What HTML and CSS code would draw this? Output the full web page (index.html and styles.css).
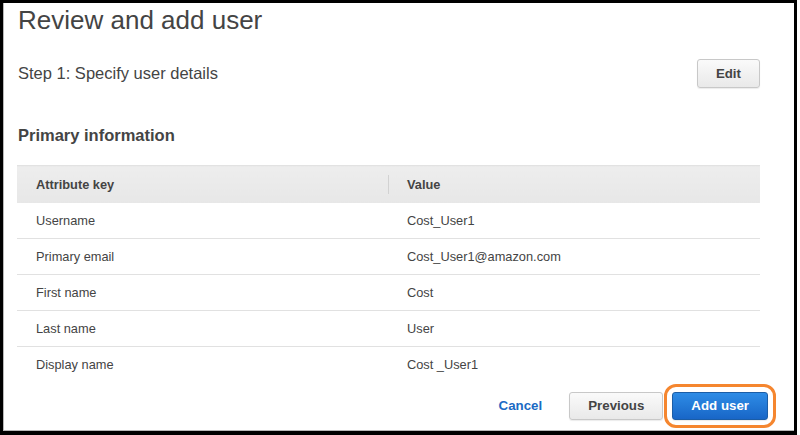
FILE: index.html
```html
<!DOCTYPE html>
<html lang="en">
<head>
<meta charset="utf-8">
<title>Review and add user</title>
<link rel="stylesheet" href="styles.css">
</head>
<body>
<div class="frame">
  <h1 class="title">Review and add user</h1>
  <div class="step-row">
    <h2 class="step">Step 1: Specify user details</h2>
    <button class="btn">Edit</button>
  </div>
  <h3 class="section">Primary information</h3>
  <table class="attrs">
    <thead>
      <tr><th class="col-key">Attribute key</th><th class="col-val"><span class="divider"></span>Value</th></tr>
    </thead>
    <tbody>
      <tr><td>Username</td><td class="val">Cost_User1</td></tr>
      <tr><td>Primary email</td><td class="val">Cost_User1@amazon.com</td></tr>
      <tr><td>First name</td><td class="val">Cost</td></tr>
      <tr><td>Last name</td><td class="val">User</td></tr>
      <tr class="last"><td>Display name</td><td class="val">Cost _User1</td></tr>
    </tbody>
  </table>
  <div class="footer">
    <button class="link-btn">Cancel</button>
    <button class="btn btn-foot">Previous</button>
    <button class="btn btn-primary highlighted">Add user</button>
  </div>
</div>
</body>
</html>
```
FILE: styles.css
```css
* { box-sizing: border-box; }
html, body { margin: 0; padding: 0; background: #fff; }
body {
  font-family: Arial, "Liberation Sans", sans-serif;
  color: #444;
}
.frame {
  width: 797px;
  height: 435px;
  border-style: solid;
  border-color: #000;
  border-width: 3px 3px 4px 3px;
  box-shadow: inset 1px -1px 0 #b8b8b8;
  padding: 2px 34px 0 15px;
  overflow: hidden;
}
.title {
  margin: 0;
  font-size: 26px;
  line-height: 30px;
  font-weight: normal;
  color: #444;
}
.step-row {
  margin-top: 24px;
  display: flex;
  align-items: center;
  justify-content: space-between;
  height: 29px;
}
.step {
  margin: 0 0 2px 0;
  font-size: 16.5px;
  line-height: 20px;
  font-weight: normal;
  color: #444;
}
.btn {
  font-family: Arial, "Liberation Sans", sans-serif;
  font-size: 13.3px;
  font-weight: bold;
  color: #444;
  height: 29px;
  padding: 0 18px;
  border: 1px solid #c8c8c8;
  border-radius: 3px;
  background: linear-gradient(#fafafa, #e9e9e9);
  box-shadow: 0 1px 1px rgba(0,0,0,0.08);
  cursor: pointer;
}
.section {
  margin: 37px 0 0 0;
  font-size: 16.5px;
  line-height: 20px;
  font-weight: bold;
  color: #444;
}
.attrs {
  margin: 20px 0 0 -1px;
  width: calc(100% + 1px);
  border-collapse: collapse;
  font-size: 12.8px;
}
.attrs th {
  height: 37px;
  background: linear-gradient(#ededed, #e7e7e7);
  border-top: 1px solid #e2e2e2;
  text-align: left;
  font-weight: bold;
  color: #444;
  padding: 0 0 0 19px;
}
.attrs .col-key { width: 371px; }
.attrs .col-val { position: relative; }
.divider {
  position: absolute;
  left: 0;
  top: 9px;
  height: 19px;
  width: 1px;
  background: #d2d2d2;
}
.attrs td {
  height: 36px;
  padding: 0 0 0 19px;
  border-bottom: 1px solid #e1e1e1;
  color: #444;
}
.attrs tr.last td { border-bottom: none; }
.footer {
  margin-top: 9px;
  margin-right: -8px;
  display: flex;
  justify-content: flex-end;
  align-items: center;
  gap: 9px;
}
.link-btn {
  font-family: Arial, "Liberation Sans", sans-serif;
  font-size: 13.3px;
  font-weight: bold;
  color: #1b6ac4;
  background: none;
  border: none;
  padding: 0 18px 0 17px;
  height: 28px;
  cursor: pointer;
}
.btn-foot { height: 28px; }
.btn-primary {
  height: 28px;
  color: #fff;
  border-color: #1b5da6;
  background: linear-gradient(#2e8ce6, #1866c7);
}
.highlighted { position: relative; }
.highlighted::after {
  content: "";
  position: absolute;
  left: -9px;
  right: -9px;
  top: -9px;
  bottom: -9px;
  border: 3px solid #f5862f;
  border-radius: 12px;
  pointer-events: none;
}
```
